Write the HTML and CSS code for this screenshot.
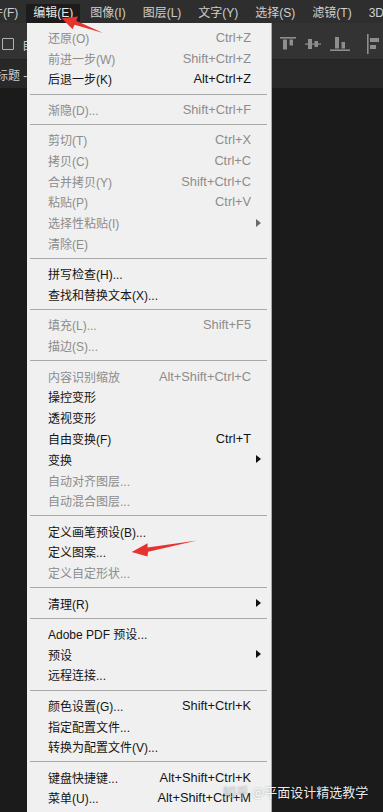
FILE: index.html
```html
<!DOCTYPE html>
<html lang="zh-CN">
<head>
<meta charset="utf-8">
<title>编辑菜单</title>
<link rel="stylesheet" href="styles.css">
</head>
<body>
<div class="app">
  <div class="menubar">
    <span class="mb-item mb-first">文件(F)</span>
    <span class="mb-item mb-active">编辑(E)</span>
    <span class="mb-item">图像(I)</span>
    <span class="mb-item">图层(L)</span>
    <span class="mb-item">文字(Y)</span>
    <span class="mb-item">选择(S)</span>
    <span class="mb-item">滤镜(T)</span>
    <span class="mb-item">3D(D)</span>
  </div>
  <div class="toolbar">
    <span class="checkbox"></span>
    <span class="tb-text">自动选择</span>
    <div class="align-icons">
      <svg class="ic ic1" width="16" height="14" viewBox="0 0 16 14"><rect x="0" y="0" width="16" height="1.6"/><rect x="3" y="2.5" width="4" height="10"/><rect x="9.5" y="2.5" width="3.5" height="6"/></svg>
      <svg class="ic ic2" width="16" height="14" viewBox="0 0 16 14"><rect x="0" y="6.5" width="16" height="1.2"/><rect x="3" y="2" width="4" height="10"/><rect x="9.5" y="4" width="3.5" height="6"/></svg>
      <svg class="ic ic3" width="20" height="16" viewBox="0 0 20 16"><rect x="0" y="14.4" width="20" height="1.6"/><rect x="5" y="2" width="4" height="11.5"/><rect x="11.5" y="7" width="3.5" height="6.5"/></svg>
      <svg class="ic ic4" width="12" height="20" viewBox="0 0 12 20"><rect x="0" y="0" width="1.6" height="20"/><rect x="3" y="4" width="9" height="4"/><rect x="3" y="11" width="6" height="4"/></svg>
    </div>
  </div>
  <div class="tabs"><span class="tab">未标题 - 1 @ 100% (RGB/8)</span></div>
  <div class="canvas"></div>

  <div class="dropdown">
    <div class="row off"><span class="label">还原(O)</span><span class="key">Ctrl+Z</span><span class="arr"></span></div>
    <div class="row off"><span class="label">前进一步(W)</span><span class="key">Shift+Ctrl+Z</span><span class="arr"></span></div>
    <div class="row"><span class="label">后退一步(K)</span><span class="key">Alt+Ctrl+Z</span><span class="arr"></span></div>
    <div class="sep"></div>
    <div class="row off"><span class="label">渐隐(D)...</span><span class="key">Shift+Ctrl+F</span><span class="arr"></span></div>
    <div class="sep"></div>
    <div class="row off"><span class="label">剪切(T)</span><span class="key">Ctrl+X</span><span class="arr"></span></div>
    <div class="row off"><span class="label">拷贝(C)</span><span class="key">Ctrl+C</span><span class="arr"></span></div>
    <div class="row off"><span class="label">合并拷贝(Y)</span><span class="key">Shift+Ctrl+C</span><span class="arr"></span></div>
    <div class="row off"><span class="label">粘贴(P)</span><span class="key">Ctrl+V</span><span class="arr"></span></div>
    <div class="row off"><span class="label">选择性粘贴(I)</span><span class="key"></span><span class="arr sub"></span></div>
    <div class="row off"><span class="label">清除(E)</span><span class="key"></span><span class="arr"></span></div>
    <div class="sep"></div>
    <div class="row"><span class="label">拼写检查(H)...</span><span class="key"></span><span class="arr"></span></div>
    <div class="row"><span class="label">查找和替换文本(X)...</span><span class="key"></span><span class="arr"></span></div>
    <div class="sep"></div>
    <div class="row off"><span class="label">填充(L)...</span><span class="key">Shift+F5</span><span class="arr"></span></div>
    <div class="row off"><span class="label">描边(S)...</span><span class="key"></span><span class="arr"></span></div>
    <div class="sep"></div>
    <div class="row off"><span class="label">内容识别缩放</span><span class="key">Alt+Shift+Ctrl+C</span><span class="arr"></span></div>
    <div class="row"><span class="label">操控变形</span><span class="key"></span><span class="arr"></span></div>
    <div class="row"><span class="label">透视变形</span><span class="key"></span><span class="arr"></span></div>
    <div class="row"><span class="label">自由变换(F)</span><span class="key">Ctrl+T</span><span class="arr"></span></div>
    <div class="row"><span class="label">变换</span><span class="key"></span><span class="arr sub"></span></div>
    <div class="row off"><span class="label">自动对齐图层...</span><span class="key"></span><span class="arr"></span></div>
    <div class="row off"><span class="label">自动混合图层...</span><span class="key"></span><span class="arr"></span></div>
    <div class="sep"></div>
    <div class="row"><span class="label">定义画笔预设(B)...</span><span class="key"></span><span class="arr"></span></div>
    <div class="row"><span class="label">定义图案...</span><span class="key"></span><span class="arr"></span></div>
    <div class="row off"><span class="label">定义自定形状...</span><span class="key"></span><span class="arr"></span></div>
    <div class="sep"></div>
    <div class="row"><span class="label">清理(R)</span><span class="key"></span><span class="arr sub"></span></div>
    <div class="sep"></div>
    <div class="row"><span class="label">Adobe PDF 预设...</span><span class="key"></span><span class="arr"></span></div>
    <div class="row"><span class="label">预设</span><span class="key"></span><span class="arr sub"></span></div>
    <div class="row"><span class="label">远程连接...</span><span class="key"></span><span class="arr"></span></div>
    <div class="sep"></div>
    <div class="row"><span class="label">颜色设置(G)...</span><span class="key">Shift+Ctrl+K</span><span class="arr"></span></div>
    <div class="row"><span class="label">指定配置文件...</span><span class="key"></span><span class="arr"></span></div>
    <div class="row"><span class="label">转换为配置文件(V)...</span><span class="key"></span><span class="arr"></span></div>
    <div class="sep"></div>
    <div class="row"><span class="label">键盘快捷键...</span><span class="key">Alt+Shift+Ctrl+K</span><span class="arr"></span></div>
    <div class="row"><span class="label">菜单(U)...</span><span class="key">Alt+Shift+Ctrl+M</span><span class="arr"></span></div>
  </div>

  <svg class="annot" width="383" height="812" viewBox="0 0 383 812">
    <polygon points="61.7,18.3 78,16.6 76.2,20.8 103,33 74.6,24.8 72.6,29.2"/>
    <polygon points="131.7,552 147.6,543.2 147.6,547.6 197,540.6 148.2,551.8 147.4,556.6"/>
  </svg>

  <div class="watermark"><span class="wm-site">知乎</span> @平面设计精选教学</div>
</div>
</body>
</html>
```

FILE: styles.css
```css
* { box-sizing: border-box; }

html, body {
  margin: 0;
  padding: 0;
  background: #1b1b1b;
}

body {
  font-family: "Liberation Sans", "Noto Sans CJK SC", sans-serif;
  font-size: 12px;
}

.app {
  position: relative;
  width: 383px;
  height: 812px;
  overflow: hidden;
  display: flex;
  flex-direction: column;
  background: #1b1b1b;
}

/* top menu bar */
.menubar {
  height: 23px;
  flex: none;
  display: flex;
  align-items: flex-end;
  gap: 3px;
  background: #2e2e2e;
  white-space: nowrap;
}

.mb-item {
  height: 19px;
  line-height: 19px;
  padding: 0 7px;
  color: #cfcfcf;
}

.mb-first {
  margin-left: -28px;
  padding-right: 5px;
}

.mb-active {
  background: #1c1c1c;
  color: #e6e6e6;
}

/* options toolbar */
.toolbar {
  height: 37px;
  flex: none;
  display: flex;
  align-items: center;
  padding-top: 6px;
  background: #333333;
  border-bottom: 1px solid #222222;
}

.checkbox {
  width: 12px;
  height: 12px;
  margin-left: 2px;
  border: 1px solid #b0b0b0;
  border-radius: 1px;
  flex: none;
}

.tb-text {
  margin-left: 8px;
  color: #cfcfcf;
  white-space: nowrap;
}

.align-icons {
  margin-left: auto;
  display: flex;
  align-items: center;
}

.ic { fill: #8e8e8e; flex: none; display: block; }
.ic1 { margin-right: 9px; }
.ic2 { margin-right: 9px; }
.ic3 { margin-right: 17px; margin-top: -3px; }
.ic4 { margin-right: 4px; }

/* document tabs */
.tabs {
  height: 28px;
  flex: none;
  display: flex;
  align-items: center;
  background: #282828;
}

.tab {
  color: #cfcfcf;
  margin-left: -16px;
  white-space: nowrap;
}

.canvas {
  flex: 1;
  background: #1b1b1b;
}

/* dropdown menu (overlay) */
.dropdown {
  position: absolute;
  left: 27px;
  top: 23px;
  width: 245px;
  height: 800px;
  padding-top: 4px;
  background: #f0f0f0;
  border-right: 1px solid #a9a9a9;
  color: #141414;
}

.row {
  display: grid;
  grid-template-columns: 1fr auto 20px;
  align-items: center;
  height: 20.8px;
  padding-left: 21px;
  white-space: nowrap;
}

.row.off { color: #8c8c8c; }

.key {
  text-align: right;
  font-size: 12.8px;
}

.arr.sub {
  justify-self: start;
  margin-left: 5px;
  width: 0;
  height: 0;
  border-top: 4.5px solid transparent;
  border-bottom: 4.5px solid transparent;
  border-left: 5px solid #101010;
}

.row.off .arr.sub { border-left-color: #6a6a6a; }

.sep {
  height: 9.5px;
  display: flex;
  align-items: center;
  padding: 0 4px 0 3px;
}

.sep::before {
  content: "";
  flex: 1;
  height: 1px;
  background: #a8a8a8;
}

/* red annotation arrows */
.annot {
  position: absolute;
  left: 0;
  top: 0;
  pointer-events: none;
  fill: #e5342f;
}

/* watermark */
.watermark {
  position: absolute;
  left: 223px;
  top: 783px;
  font-family: "Noto Sans CJK SC", sans-serif;
  font-size: 13px;
  line-height: 18px;
  color: rgba(255, 255, 255, 0.92);
  white-space: nowrap;
  text-shadow: 0 0 2px rgba(0, 0, 0, 0.35);
}

.wm-site { color: rgba(235, 235, 235, 0.55); }
```
